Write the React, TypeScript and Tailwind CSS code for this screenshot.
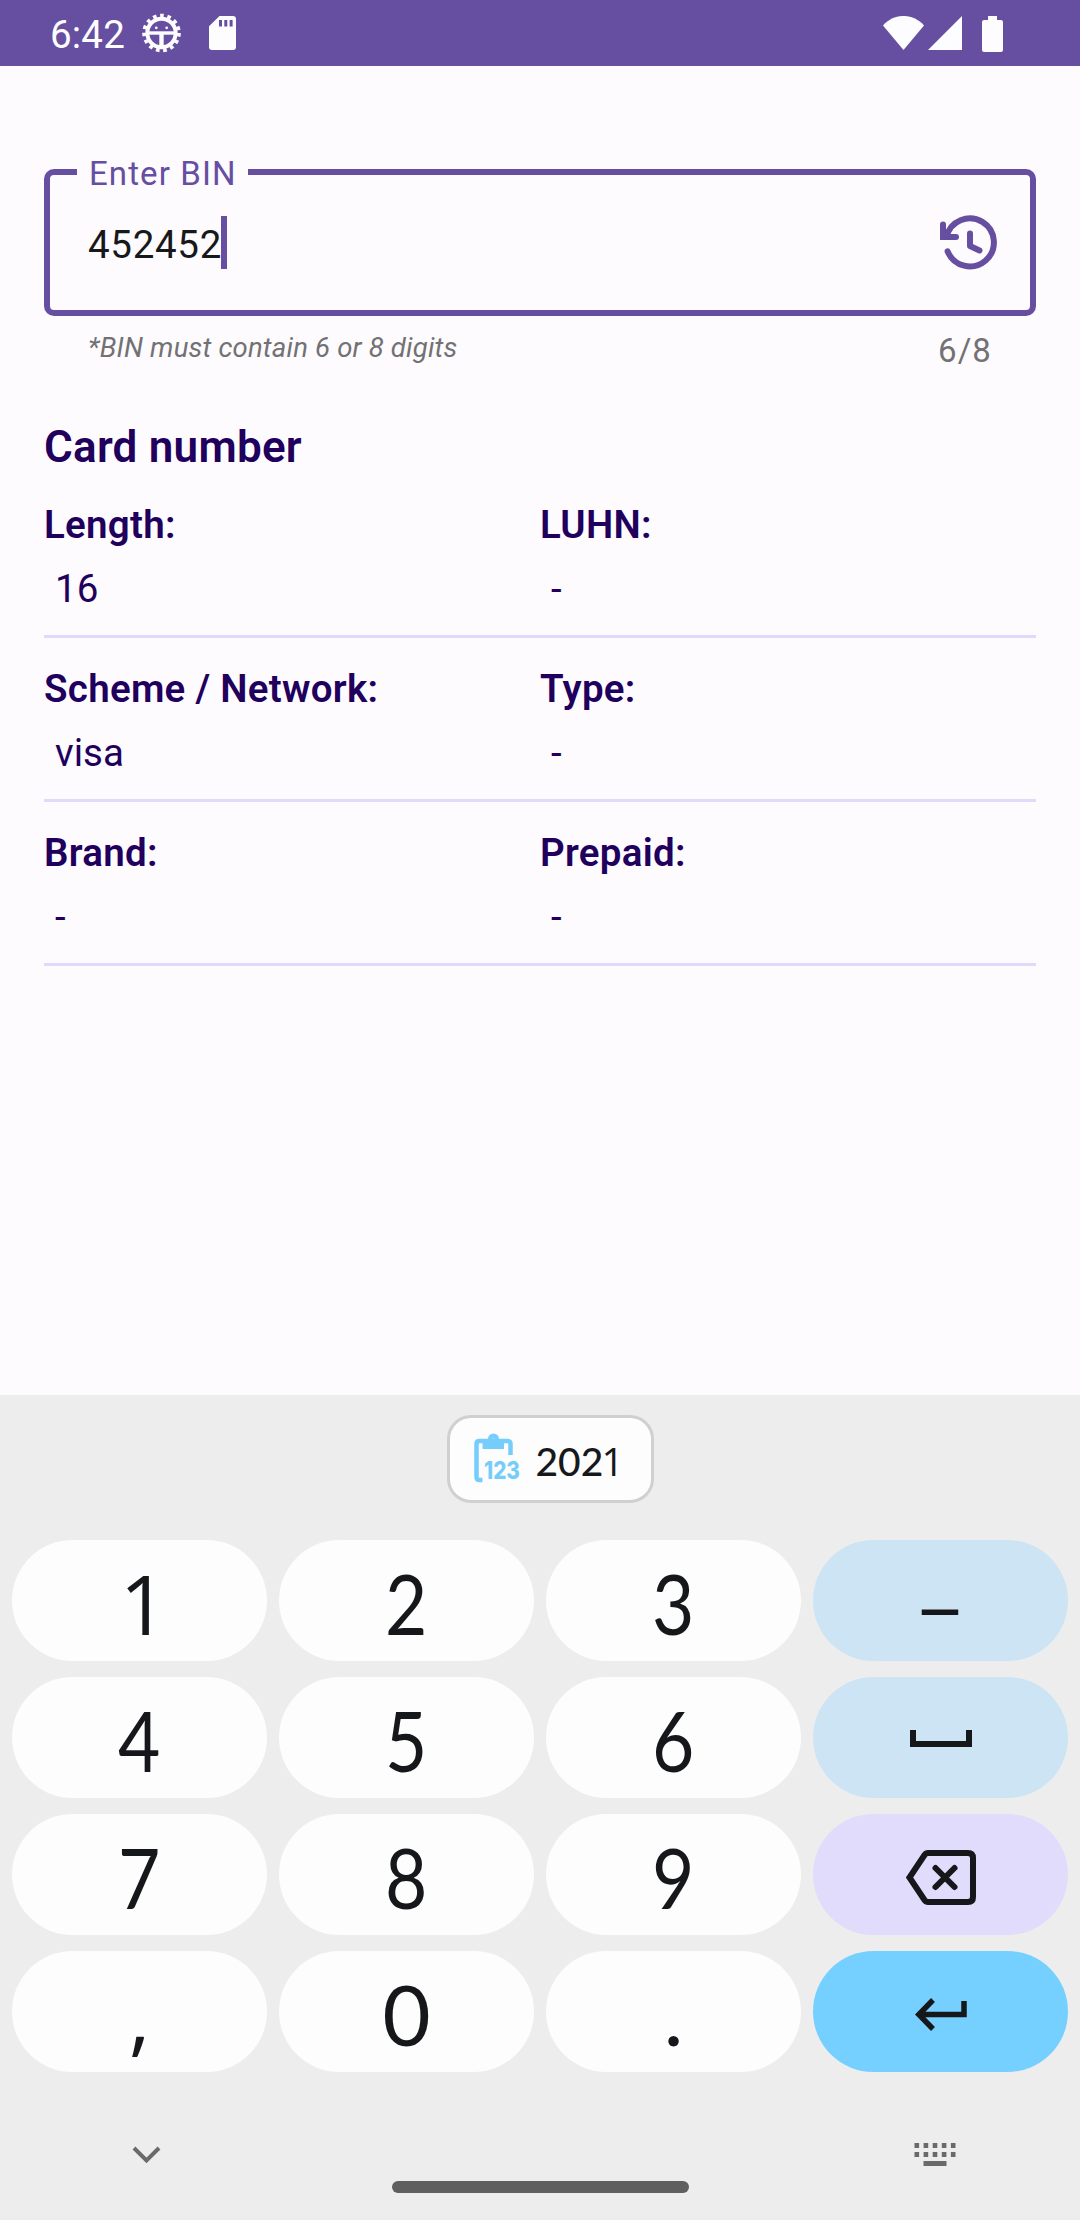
import React from "react";

function StatusBar() {
  return (
    <header className="flex h-[66px] shrink-0 items-center bg-[#664fa1] pl-[50px] text-[#fdfcff]">
      <span className="w-[76px] text-[38.5px] leading-[66px] tracking-[0.2px] pt-[4px]">6:42</span>
      <svg className="ml-[15px]" width="40" height="40" viewBox="0 0 40 40" fill="none" stroke="currentColor">
        <circle cx="20.5" cy="20" r="14.2" strokeWidth="4" />
        <circle cx="20.5" cy="20" r="17.3" strokeWidth="4" strokeDasharray="3.6 3.64" />
        <path d="M7 20h27" strokeWidth="3.4" />
        <path d="M20.5 20v14" strokeWidth="4.4" />
        <circle cx="15.3" cy="14.8" r="1.4" fill="currentColor" stroke="none" />
        <circle cx="25.7" cy="14.8" r="1.4" fill="currentColor" stroke="none" />
      </svg>
      <svg className="ml-[28px]" width="27" height="34" viewBox="0 0 27 34">
        <path fill="currentColor" fillRule="evenodd" d="M10.5 0H24a3 3 0 0 1 3 3v28a3 3 0 0 1-3 3H3a3 3 0 0 1-3-3V10.300zM10 4v6.500h3V4zM15.300 4v6.500h3V4zM20.600 4v6.500h3V4z" />
      </svg>
      <div className="ml-auto mr-[77px] flex items-center">
        <svg width="41" height="34" viewBox="0 0 41 34">
          <path fill="currentColor" d="M0 9.500C11-3.200 30-3.200 41 9.500L20.500 34z" />
        </svg>
        <svg className="ml-[4px]" width="34" height="34" viewBox="0 0 34 34">
          <path fill="currentColor" d="M34 0v34H0z" />
        </svg>
        <svg className="ml-[20px] mt-[1px]" width="21" height="36" viewBox="0 0 21 36">
          <path fill="currentColor" d="M6 0h9v4h4a2 2 0 0 1 2 2v28a2 2 0 0 1-2 2H2a2 2 0 0 1-2-2V6a2 2 0 0 1 2-2h4z" />
        </svg>
      </div>
    </header>
  );
}

function BinField() {
  return (
    <section className="mt-[103px] h-[221px] px-[44px]">
      <div className="relative flex h-[147px] items-center justify-between rounded-[10px] border-[6px] border-[#664fa1] pl-[38px] pr-[32px]">
        <span className="absolute left-[27px] top-[-23px] h-[44px] w-[171px] bg-[#fdfbfe] pl-[12px] text-[33px] leading-[44px] tracking-[1.1px] text-[#664fa1]">
          Enter BIN
        </span>
        <div className="flex items-center">
          <span className="pt-[4px] text-[38.5px] leading-[50px] tracking-[0.7px] text-[#17181a]">452452</span>
          <span className="-ml-[1px] h-[53px] w-[6px] bg-[#664fa1]" />
        </div>
        <svg width="60" height="60" viewBox="938 212 60 60" fill="none" stroke="#664fa1" strokeWidth="6" strokeLinecap="round">
          <path d="M947.600 250.300A24 24 0 1 0 946.500 236" />
          <path d="M943 223.500V236H956" strokeLinejoin="miter" />
          <path d="M970 232.500V245L979.500 249.500" strokeLinejoin="round" />
        </svg>
      </div>
      <div className="flex justify-between pl-[44px] pr-[44px] text-[#727173]">
        <span className="mt-[16px] text-[27.5px] italic leading-[32px] tracking-[0.19px]">*BIN must contain 6 or 8 digits</span>
        <span className="mt-[15px] text-[33px] leading-[40px] tracking-[1.1px]">6/8</span>
      </div>
    </section>
  );
}

function Cell({ label, value }: { label: string; value: string }) {
  return (
    <div className="flex w-1/2 flex-col">
      <span className="text-[38.5px] font-semibold leading-[50px] tracking-[0.28px]">{label}</span>
      <span className="mt-[14px] pl-[11px] text-[38.5px] leading-[50px]">{value}</span>
    </div>
  );
}

const rows = [
  [["Length:", "16"], ["LUHN:", "-"]],
  [["Scheme / Network:", "visa"], ["Type:", "-"]],
  [["Brand:", "-"], ["Prepaid:", "-"]],
];

function CardNumber() {
  return (
    <section className="px-[44px] text-[#21005d]">
      <h2 className="mt-[27px] text-[44px] font-semibold leading-[60px] tracking-[0.25px]">Card number</h2>
      <div className="mt-[-3px]">
        {rows.map((r) => (
          <div key={r[0][0]} className="flex h-[164px] items-start border-b-[3px] border-[#e1dafc] pt-[26px]">
            {r.map(([l, v]) => (
              <Cell key={l} label={l} value={v} />
            ))}
          </div>
        ))}
      </div>
    </section>
  );
}

function ClipChip() {
  return (
    <div className="mx-auto mt-[20px] flex h-[88px] w-[207px] translate-x-[10px] items-center rounded-[24px] border-[3px] border-[#d0d0d2] bg-[#fdfdfd]">
      <svg className="ml-[23px] shrink-0 overflow-visible" width="48" height="50" viewBox="473 1433 48 50">
        <path d="M482.500 1479H479.500Q476.500 1479 476.500 1476V1443Q476.500 1440 479.500 1440H507.500Q510.500 1440 510.500 1443V1454" fill="none" stroke="#75cdfb" strokeWidth="4.500" strokeLinecap="butt" />
        <path fillRule="evenodd" fill="#75cdfb" d="M482.500 1438h5.500a5.500 5.500 0 0 1 11 0H504v10h-21.500zM493.500 1437.500a2.300 2.300 0 1 0 0.010 0z" />
        <text x="484" y="1478" fontFamily="Inter" fontWeight="800" fontSize="24" textLength="36" lengthAdjust="spacingAndGlyphs" fill="#75cdfb">123</text>
      </svg>
      <span className="ml-[15px] pt-[3px] font-['Lato'] text-[39px] font-medium leading-[60px] text-[#17181c]">
        202<span className="-ml-[2px] font-['Open_Sans']">1</span>
      </span>
    </div>
  );
}

function Key({ children, tone = "bg-[#fdfdfd]" }: { children: React.ReactNode; tone?: string }) {
  return <button className={`flex h-[121px] items-center justify-center rounded-full ${tone} text-[#15171b]`}>{children}</button>;
}

function Glyph({ c, cls = "font-['Lato'] scale-x-[0.88]" }: { c: string; cls?: string }) {
  return <span className={`inline-block pt-[5px] text-[83px] leading-[100px] ${cls}`}>{c}</span>;
}

function Keyboard() {
  return (
    <section className="mt-auto flex h-[825px] flex-col bg-[#ededee]">
      <ClipChip />
      <div className="mt-[37px] grid grid-cols-4 gap-x-[12px] gap-y-[16px] px-[12px]">
        <Key><Glyph c="1" cls="font-['Open_Sans'] pl-[8px]" /></Key>
        <Key><Glyph c="2" /></Key>
        <Key><Glyph c="3" /></Key>
        <Key tone="bg-[#cde4f4]"><Glyph c="–" cls="font-['Lato'] scale-x-[1.1] pt-[9px]" /></Key>
        <Key><Glyph c="4" /></Key>
        <Key><Glyph c="5" /></Key>
        <Key><Glyph c="6" /></Key>
        <Key tone="bg-[#cde4f4]">
          <svg className="mt-[3px]" width="62" height="18" viewBox="0 0 62 18" fill="none" stroke="currentColor" strokeWidth="6">
            <path d="M3 0v14h56V0" />
          </svg>
        </Key>
        <Key><Glyph c="7" /></Key>
        <Key><Glyph c="8" /></Key>
        <Key><Glyph c="9" /></Key>
        <Key tone="bg-[#e1dbfc]">
          <svg className="mt-[6px]" width="70" height="55" viewBox="0 0 70 55" fill="none" stroke="currentColor" strokeWidth="6">
            <path d="M22 3H62Q67 3 67 8V47Q67 52 62 52H22Q20 52 18.500 50L3.500 27.500L18.500 5Q20 3 22 3z" />
            <path d="M29.500 18l19 19M48.500 18l-19 19" strokeLinecap="round" />
          </svg>
        </Key>
        <Key><Glyph c="," cls="font-['Open_Sans']" /></Key>
        <Key><Glyph c="0" cls="font-['Lato']" /></Key>
        <Key><Glyph c="." cls="font-['Lato']" /></Key>
        <Key tone="bg-[#75d0ff]">
          <svg className="mt-[5px]" width="52" height="33" viewBox="0 0 52 33" fill="none" stroke="currentColor" strokeWidth="5.500">
            <path d="M49 3V16.500H4M18 2L3.800 16.500L18 31" />
          </svg>
        </Key>
      </div>
      <div className="flex items-start justify-between pl-[132px] pr-[124px] pt-[71px] text-[#6a6a6c]">
        <svg className="mt-[3px]" width="29" height="18" viewBox="0 0 29 18" fill="none" stroke="currentColor" strokeWidth="4">
          <path d="M2 2L14.500 14.500L27 2" />
        </svg>
        <svg width="42" height="24" viewBox="0 0 42 24" fill="none" stroke="currentColor" strokeWidth="5">
          <path d="M0.500 2.500H42M0.500 11.500H42" strokeDasharray="4.600 4.500" />
          <path d="M9.500 20.500H32.500" />
        </svg>
      </div>
      <div className="mx-auto mt-[14px] h-[12px] w-[297px] rounded-full bg-[#5f5f60]" />
    </section>
  );
}

export default function App() {
  return (
    <main className="flex h-[2220px] w-[1080px] flex-col overflow-hidden bg-[#fdfbfe] font-['Roboto',sans-serif]">
      <StatusBar />
      <BinField />
      <CardNumber />
      <Keyboard />
    </main>
  );
}
